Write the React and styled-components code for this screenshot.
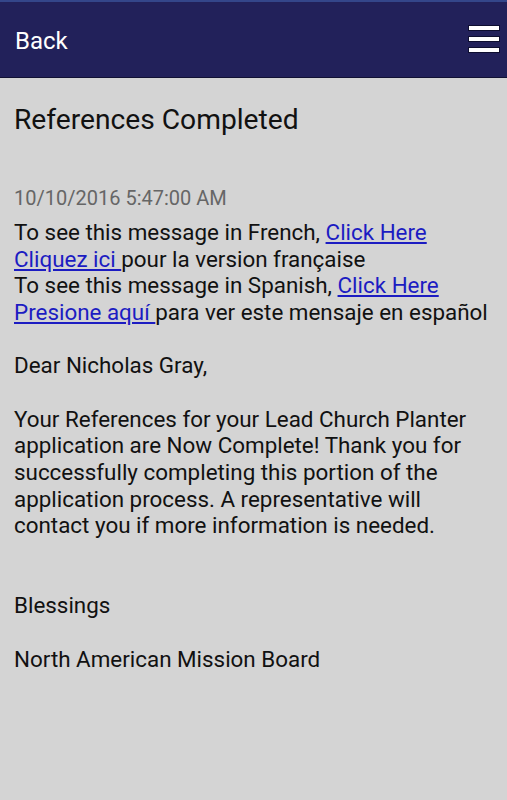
import styled, { createGlobalStyle } from "styled-components";

const GlobalStyle = createGlobalStyle`
  html, body {
    margin: 0;
    padding: 0;
    background: #d4d4d4;
  }
  body {
    font-family: Roboto, "Noto Sans", sans-serif;
  }
`;

const Page = styled.div`
  min-height: 800px;
  background: #d4d4d4;
  color: #111;
`;

const Header = styled.header`
  height: 75px;
  display: flex;
  align-items: center;
  justify-content: space-between;
  padding: 0 7px 0 15px;
  background: #22215a;
  border-top: 2px solid #34468a;
  border-bottom: 1px solid #111133;
`;

const BackLink = styled.span`
  color: #fff;
  font-size: 24px;
  padding-top: 2px;
`;

const MenuButton = styled.div`
  display: flex;
  flex-direction: column;
  gap: 5px;
  margin-bottom: 2px;
`;

const MenuBar = styled.span`
  display: block;
  width: 30px;
  height: 4px;
  background: #fff;
  border: 1px solid #0e0e30;
`;

const Content = styled.main`
  padding: 25px 12px 24px 14px;
`;

const Title = styled.h1`
  margin: 0 0 48px;
  font-size: 28.2px;
  font-weight: 400;
  line-height: 34px;
`;

const Stamp = styled.div`
  color: #666;
  font-size: 20px;
  line-height: 26px;
  margin-bottom: 8px;
`;

const Body = styled.div`
  font-size: 22.4px;
  line-height: 26.67px;
`;

const Link = styled.a`
  color: #1c1cc2;
  text-decoration: underline;
`;

export default function App() {
  return (
    <Page>
      <GlobalStyle />
      <Header>
        <BackLink>Back</BackLink>
        <MenuButton>
          <MenuBar />
          <MenuBar />
          <MenuBar />
        </MenuButton>
      </Header>
      <Content>
        <Title>References Completed</Title>
        <Stamp>10/10/2016 5:47:00 AM</Stamp>
        <Body>
          To see this message in French, <Link>Click Here</Link>
          <br />
          <Link>Cliquez ici </Link>pour la version française
          <br />
          To see this message in Spanish, <Link>Click Here </Link>
          <br />
          <Link>Presione aquí </Link>para ver este mensaje en español
          <br />
          <br />
          Dear Nicholas Gray,
          <br />
          <br />
          Your References for your Lead Church Planter application are Now
          Complete! Thank you for successfully completing this portion of the
          application process. A representative will contact you if more
          information is needed.
          <br />
          <br />
          <br />
          Blessings
          <br />
          <br />
          North American Mission Board
        </Body>
      </Content>
    </Page>
  );
}
